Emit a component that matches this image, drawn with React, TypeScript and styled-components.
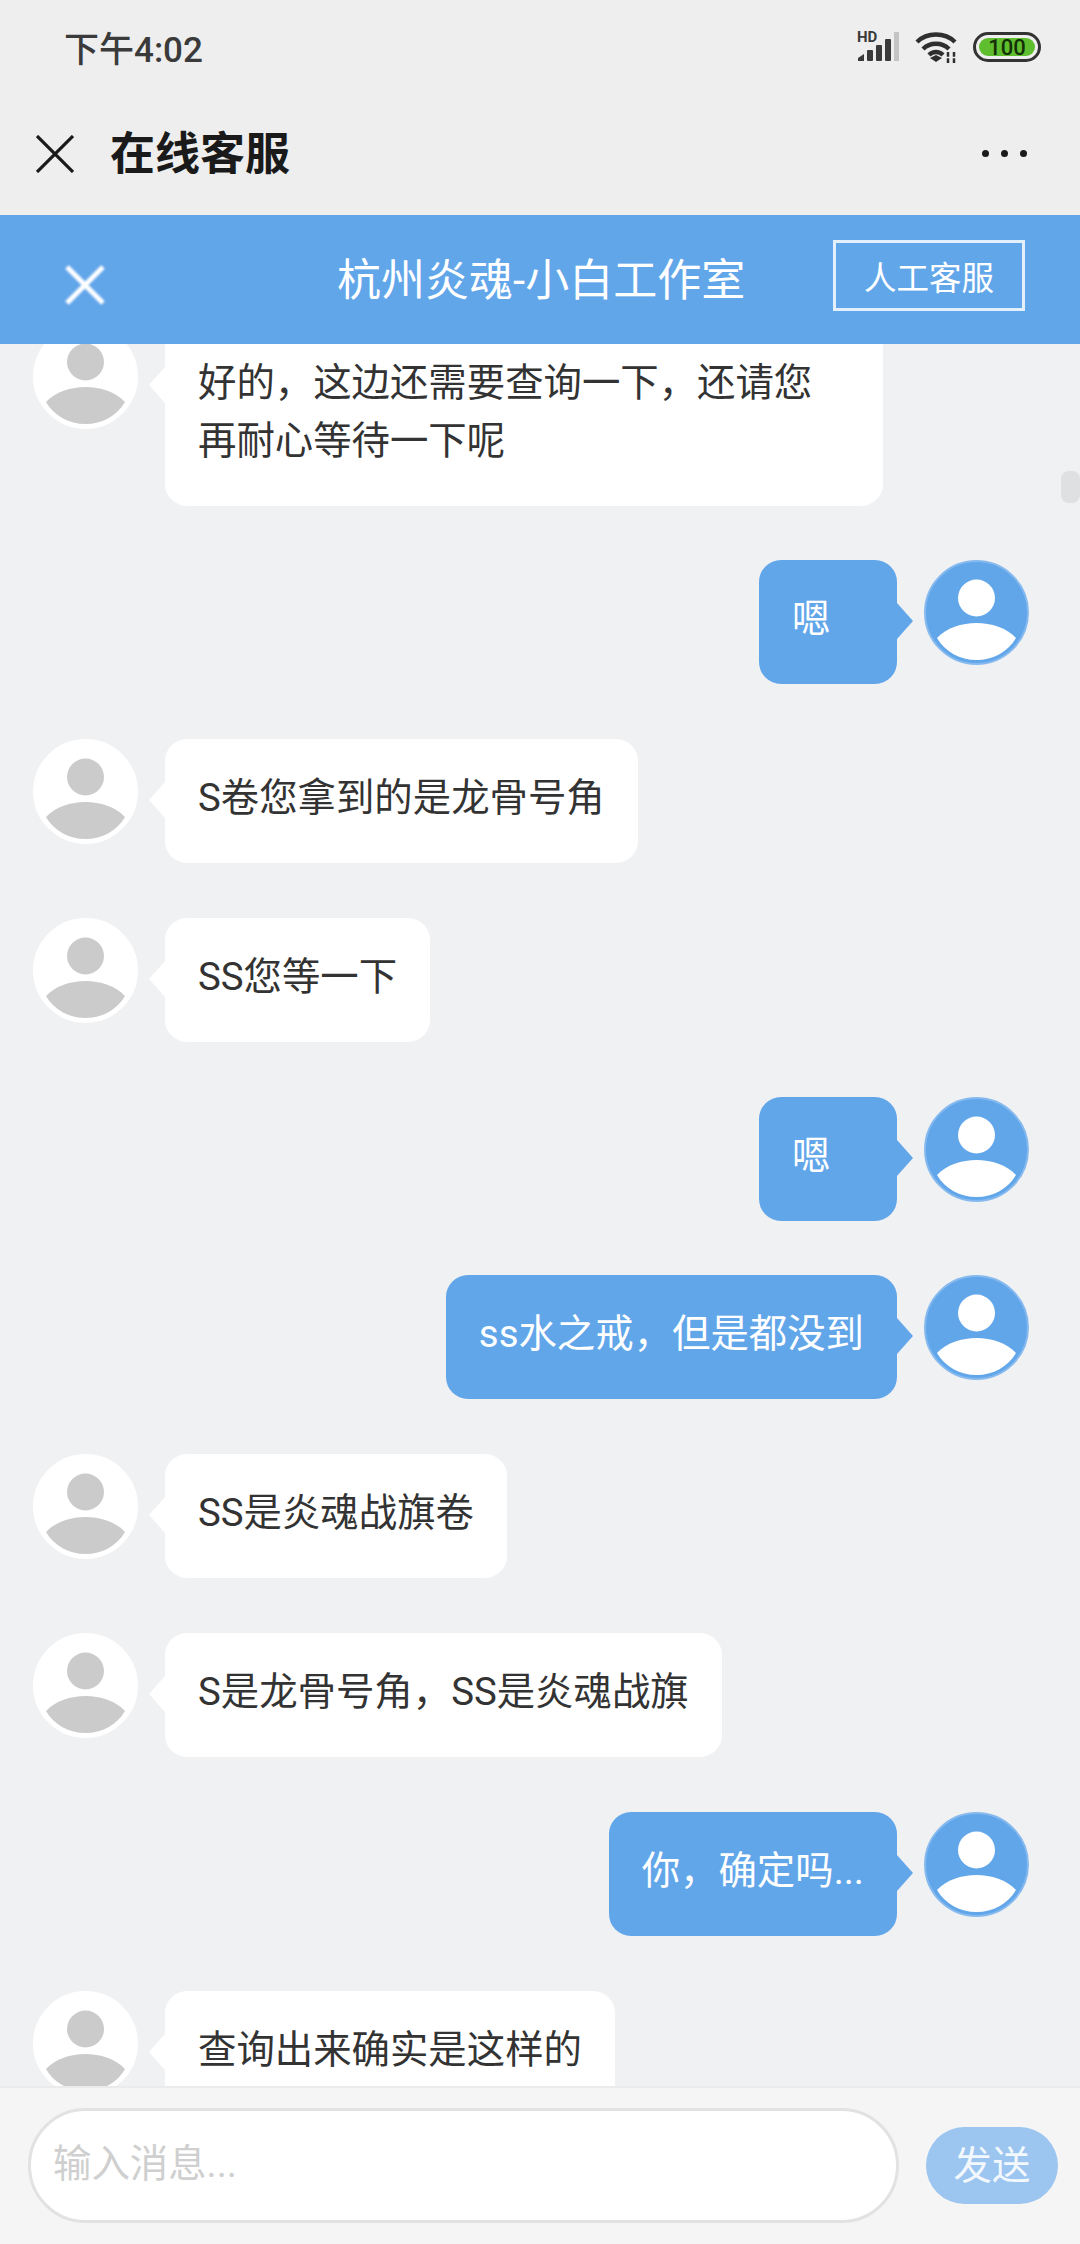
import React from 'react';
import styled, { createGlobalStyle } from 'styled-components';

const GlobalStyle = createGlobalStyle`
  html, body {
    margin: 0;
    padding: 0;
    background: #f0f1f3;
  }
  * {
    box-sizing: border-box;
  }
`;

const Page = styled.div`
  width: 1080px;
  height: 2244px;
  display: flex;
  flex-direction: column;
  overflow: hidden;
  position: relative;
  font-family: Roboto, 'Noto Sans CJK SC', sans-serif;
  background: #f0f1f3;
`;

const StatusBar = styled.div`
  height: 92px;
  flex: none;
  background: #eeeeee;
  display: flex;
  align-items: center;
  justify-content: space-between;
  padding: 0 39px 0 64px;
`;

const Time = styled.span`
  font-size: 35px;
  font-weight: 500;
  color: #3a3a3a;
`;

const StatusIcons = styled.div`
  display: flex;
  align-items: center;
  gap: 15px;
  padding-top: 2px;
`;

const NavBar = styled.div`
  height: 123px;
  flex: none;
  background: #eeeeee;
  display: flex;
  align-items: center;
  padding: 0 53px 0 36px;
`;

const NavTitle = styled.h1`
  margin: -6px 0 0 36px;
  flex: 1;
  font-size: 45px;
  font-weight: 700;
  color: #1a1a1a;
`;

const Dots = styled.div`
  display: flex;
  gap: 12px;
`;

const Dot = styled.span`
  width: 7px;
  height: 7px;
  border-radius: 50%;
  background: #1a1a1a;
`;

const ChatHeader = styled.div`
  height: 129px;
  flex: none;
  background: #62a6ea;
  display: flex;
  align-items: center;
  position: relative;
  z-index: 2;
`;

const HeaderClose = styled.div`
  width: 337px;
  flex: none;
  padding: 10px 0 0 63px;
  display: flex;
`;

const HeaderTitle = styled.div`
  width: 406px;
  flex: none;
  font-size: 44px;
  color: #fff;
  white-space: nowrap;
  margin-top: -6px;
`;

const AgentButton = styled.div`
  margin: -9px 0 0 90px;
  width: 192px;
  height: 71px;
  border: 3px solid #e3effb;
  color: #fff;
  font-size: 32.5px;
  display: flex;
  align-items: center;
  justify-content: center;
`;

const ChatList = styled.div`
  flex: 1;
  min-height: 0;
  overflow: hidden;
  position: relative;
  padding: 0 33px;
`;

const ScrollThumb = styled.div`
  position: absolute;
  top: 127px;
  right: 0;
  width: 19px;
  height: 32px;
  border-radius: 8px;
  background: #dfe0e2;
`;

const Rows = styled.div`
  display: flex;
  flex-direction: column;
  gap: 54.8px;
  margin-top: -20.5px;
`;

const Row = styled.div<{ $mine?: boolean }>`
  display: flex;
  align-items: flex-start;
  flex-direction: ${(p) => (p.$mine ? 'row-reverse' : 'row')};
  gap: 27px;
  padding-right: ${(p) => (p.$mine ? '18px' : '0')};
`;

const Bubble = styled.div<{ $mine?: boolean }>`
  position: relative;
  min-width: 138px;
  max-width: 718px;
  padding: 30px 33px 36px;
  border-radius: 22px;
  font-size: 38.4px;
  line-height: 58px;
  color: ${(p) => (p.$mine ? '#fff' : '#333')};
  background: ${(p) => (p.$mine ? '#62a6ea' : '#fff')};

  &::before {
    content: '';
    position: absolute;
    top: 43px;
    ${(p) => (p.$mine ? 'left: 100%;' : 'right: 100%;')}
    border-top: 18px solid transparent;
    border-bottom: 18px solid transparent;
    ${(p) =>
      p.$mine ? 'border-left: 16px solid #62a6ea;' : 'border-right: 16px solid #fff;'}
  }
`;

const InputBar = styled.div`
  height: 158px;
  flex: none;
  background: #f5f5f6;
  border-top: 2px solid #ebebec;
  display: flex;
  align-items: center;
  padding: 0 22px 0 28px;
  position: relative;
  z-index: 2;
`;

const InputBox = styled.div`
  width: 871px;
  height: 115px;
  margin-top: -1px;
  background: #fff;
  border: 3px solid #e2e2e2;
  border-radius: 58px;
  padding: 0 0 11px 22px;
  display: flex;
  align-items: center;
  font-size: 38.4px;
  color: #cfcfcf;
`;

const SendButton = styled.div`
  width: 132px;
  height: 77px;
  margin: -2px 0 0 auto;
  padding-bottom: 6px;
  border-radius: 39px;
  background: #9cc5f0;
  color: #f3f8fd;
  font-size: 38.4px;
  display: flex;
  align-items: center;
  justify-content: center;
`;

const SignalIcon = () => (
  <svg width="43" height="36" viewBox="0 0 43 36" style={{ marginTop: -4 }}>
    <text x="0" y="15" fontFamily="Roboto, sans-serif" fontSize="15" fontWeight="700" fill="#3a3a3a">
      HD
    </text>
    <path d="M1 34v-3l6-4v7z" fill="#3a3a3a" />
    <rect x="10" y="23" width="6" height="11" rx="1" fill="#3a3a3a" />
    <rect x="19" y="18" width="6" height="16" rx="1" fill="#3a3a3a" />
    <rect x="28" y="12" width="6" height="22" rx="1" fill="#3a3a3a" />
    <rect x="37" y="5" width="5" height="29" fill="#c4c4c4" />
  </svg>
);

const WifiIcon = () => (
  <svg width="43" height="31" viewBox="0 0 43 31">
    <g fill="none" stroke="#2f2f2f" strokeWidth="4.4">
      <path d="M2 10C12 0 30 0 40 10" />
      <path d="M8 17C15 10 27 10 34 17" />
      <path d="M14 23C18 19 24 19 28 23" />
    </g>
    <path d="M15 26l6-3 6 3-6 4z" fill="#2f2f2f" />
    <path d="M33 20v11M39 20v11" stroke="#2f2f2f" strokeWidth="2.5" />
    <path d="M30 25.5h12" stroke="#eeeeee" strokeWidth="1.5" />
  </svg>
);

const BatteryIcon = () => (
  <svg width="68" height="30" viewBox="0 0 68 30">
    <rect x="1.5" y="1.5" width="65" height="27" rx="13.5" fill="none" stroke="#333" strokeWidth="3" />
    <rect x="6" y="6" width="56" height="18" rx="9" fill="#5fbe2e" />
    <text
      x="34"
      y="23"
      textAnchor="middle"
      fontFamily="Roboto, sans-serif"
      fontSize="22"
      fontWeight="500"
      fill="#143008"
    >
      100
    </text>
  </svg>
);

const CloseIcon = () => (
  <svg width="38" height="38" viewBox="0 0 38 38">
    <path d="M1 1l36 36M37 1L1 37" stroke="#1a1a1a" strokeWidth="3.2" fill="none" />
  </svg>
);

const HeaderCloseIcon = () => (
  <svg width="44" height="42" viewBox="0 0 44 42">
    <path
      d="M4 3l36 36M40 3L4 39"
      stroke="#fff"
      strokeWidth="5"
      fill="none"
      style={{ filter: 'blur(0.8px)' }}
    />
  </svg>
);

const AvatarIcon = ({ mine }: { mine?: boolean }) => (
  <svg width="105" height="105" viewBox="0 0 105 105" style={{ flex: 'none' }}>
    <circle
      cx="52.5"
      cy="52.5"
      r="51.5"
      fill={mine ? '#62a6ea' : '#fff'}
      stroke={mine ? '#86baef' : '#fff'}
      strokeWidth="2"
    />
    <circle cx="52.5" cy="38" r="18.5" fill={mine ? '#fff' : '#cbcbcb'} />
    <path
      d="M13 78C22 68 38 63 52.5 63C67 63 83 68 92 78C84 92 69 100 52.5 100C36 100 21 92 13 78Z"
      fill={mine ? '#fff' : '#cbcbcb'}
    />
  </svg>
);

interface Message {
  id: number;
  mine?: boolean;
  text: string;
}

const messages: Message[] = [
  { id: 1, text: '好的，这边还需要查询一下，还请您再耐心等待一下呢' },
  { id: 2, mine: true, text: '嗯' },
  { id: 3, text: 'S卷您拿到的是龙骨号角' },
  { id: 4, text: 'SS您等一下' },
  { id: 5, mine: true, text: '嗯' },
  { id: 6, mine: true, text: 'ss水之戒，但是都没到' },
  { id: 7, text: 'SS是炎魂战旗卷' },
  { id: 8, text: 'S是龙骨号角，SS是炎魂战旗' },
  { id: 9, mine: true, text: '你，确定吗...' },
  { id: 10, text: '查询出来确实是这样的' },
];

const App: React.FC = () => {
  return (
    <Page>
      <GlobalStyle />
      <StatusBar>
        <Time>下午4:02</Time>
        <StatusIcons>
          <SignalIcon />
          <WifiIcon />
          <BatteryIcon />
        </StatusIcons>
      </StatusBar>
      <NavBar>
        <CloseIcon />
        <NavTitle>在线客服</NavTitle>
        <Dots>
          <Dot />
          <Dot />
          <Dot />
        </Dots>
      </NavBar>
      <ChatHeader>
        <HeaderClose>
          <HeaderCloseIcon />
        </HeaderClose>
        <HeaderTitle>杭州炎魂-小白工作室</HeaderTitle>
        <AgentButton>人工客服</AgentButton>
      </ChatHeader>
      <ChatList>
        <Rows>
          {messages.map((m) => (
            <Row key={m.id} $mine={m.mine}>
              <AvatarIcon mine={m.mine} />
              <Bubble $mine={m.mine}>{m.text}</Bubble>
            </Row>
          ))}
        </Rows>
        <ScrollThumb />
      </ChatList>
      <InputBar>
        <InputBox>输入消息...</InputBox>
        <SendButton>发送</SendButton>
      </InputBar>
    </Page>
  );
};

export default App;
